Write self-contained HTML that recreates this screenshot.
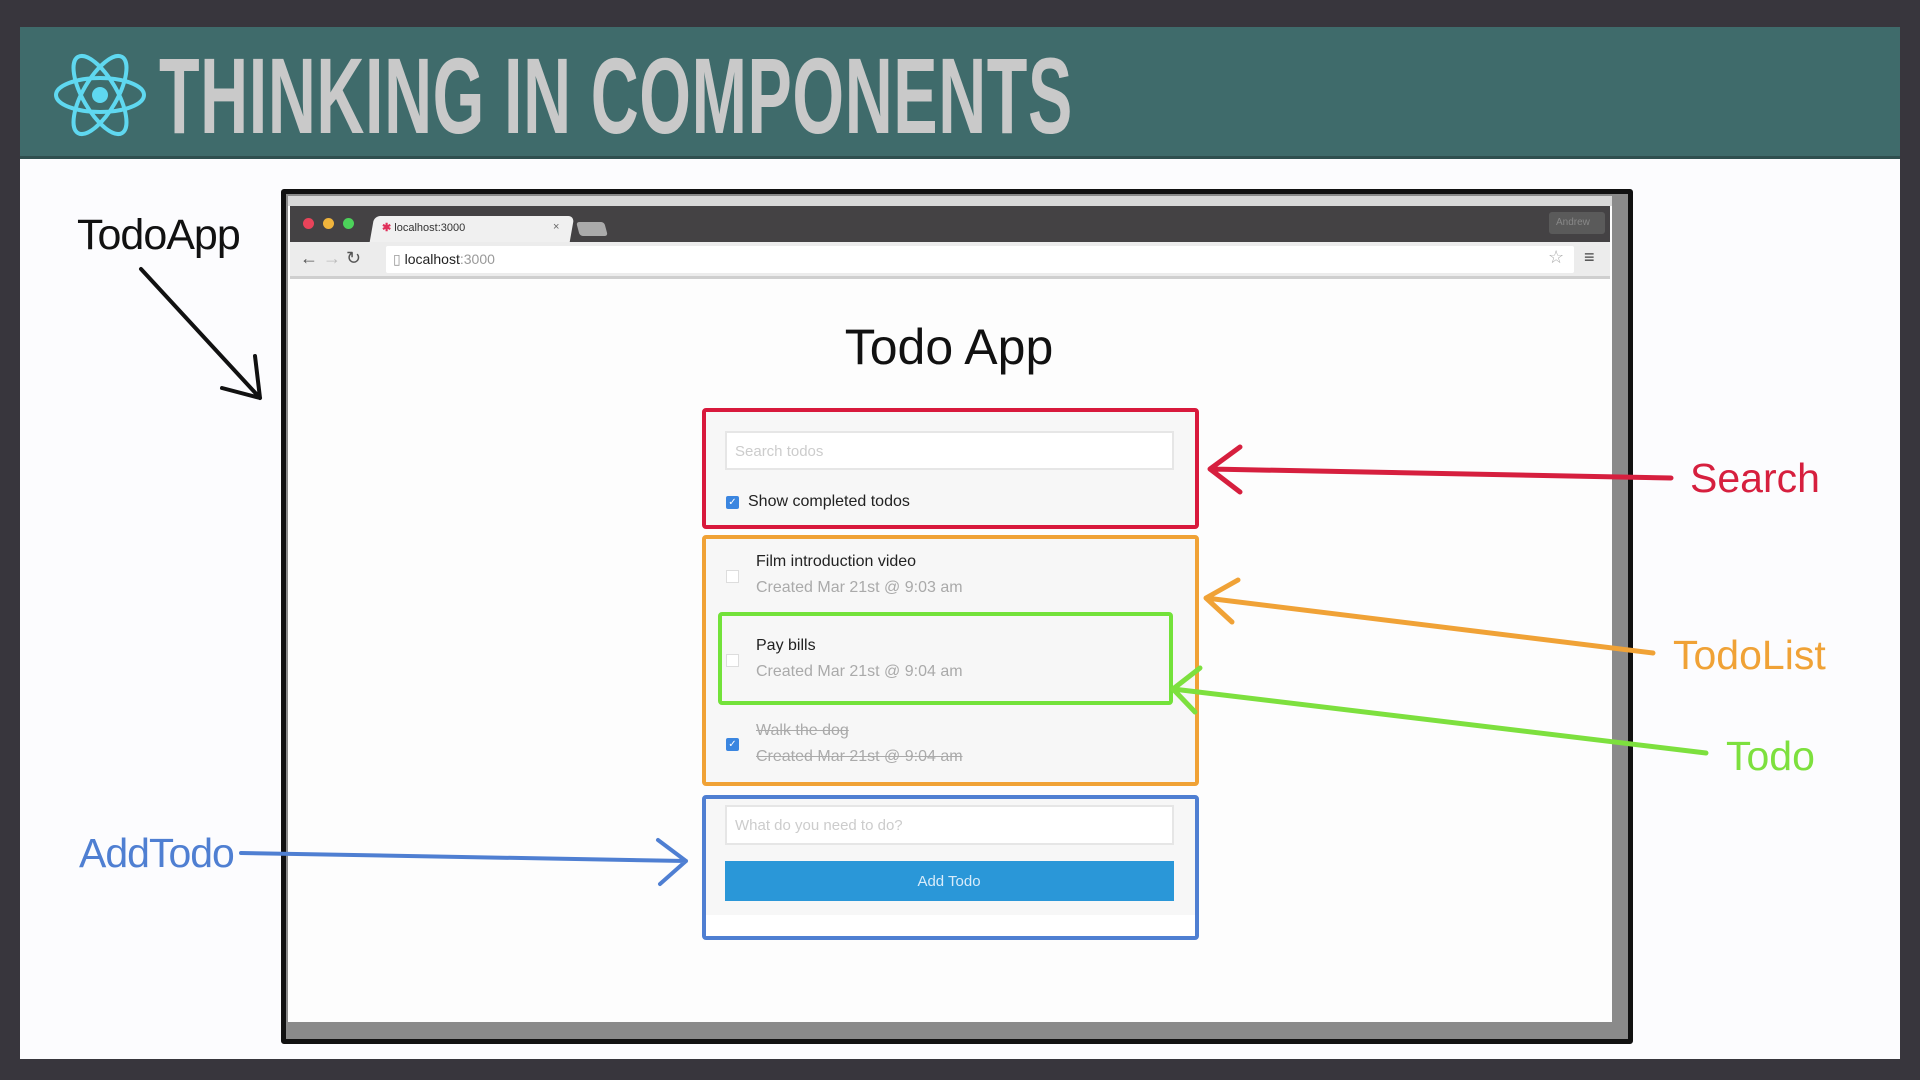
<!DOCTYPE html>
<html><head><meta charset="utf-8"><style>
*{margin:0;padding:0;box-sizing:border-box}
body{width:1920px;height:1080px;background:#38363d;position:relative;overflow:hidden;font-family:"Liberation Sans",sans-serif}
.abs{position:absolute}
#hdr{left:20px;top:27px;width:1880px;height:132px;background:#3f6b6b;border-bottom:3px solid #2f4f4f}
#slide{left:20px;top:159px;width:1880px;height:900px;background:#fcfcfe}
#title{left:159px;top:42px;font-size:108px;font-weight:bold;color:#c9c9c9;transform:scaleX(0.615);transform-origin:0 0;white-space:nowrap;letter-spacing:1px;line-height:1}
.t{position:absolute;white-space:nowrap}
</style></head><body>
<div id="hdr" class="abs"></div>
<div id="slide" class="abs"></div>
<div id="title" class="abs">THINKING IN COMPONENTS</div>
<svg class="abs" style="left:50px;top:45px" width="100" height="100" viewBox="-50 -50 100 100">
<g fill="none" stroke="#5fd8f0" stroke-width="4">
<ellipse rx="44" ry="17"/><ellipse rx="44" ry="17" transform="rotate(60)"/><ellipse rx="44" ry="17" transform="rotate(120)"/></g>
<circle r="8" fill="#5fd8f0"/></svg>

<!-- browser -->
<div class="abs" style="left:281px;top:189px;width:1352px;height:855px;background:#8a8a8a;border:5px solid #111;border-radius:3px"></div>
<div class="abs" style="left:288px;top:196px;width:1324px;height:826px;background:#fdfdfd"></div>
<div class="abs" style="left:290px;top:206px;width:1320px;height:36px;background:#444244"></div>
<div class="abs" style="left:288px;top:196px;width:1324px;height:10px;background:#d8d8d8"></div>
<div class="abs" style="left:303px;top:218px;width:11px;height:11px;border-radius:50%;background:#e8435a"></div>
<div class="abs" style="left:323px;top:218px;width:11px;height:11px;border-radius:50%;background:#f0b43c"></div>
<div class="abs" style="left:343px;top:218px;width:11px;height:11px;border-radius:50%;background:#4cd25a"></div>
<div class="abs" style="left:372px;top:216px;width:200px;height:26px;background:#f0f0f0;border-radius:6px 6px 0 0;transform:skewX(-10deg)"></div>
<div class="t" style="left:382px;top:221px;font-size:11px;color:#333"><span style="color:#e0305a;font-weight:bold">✱</span> localhost:3000</div>
<div class="t" style="left:553px;top:221px;font-size:11px;color:#666">×</div>
<div class="abs" style="left:578px;top:222px;width:28px;height:14px;background:#aaa;border-radius:3px;transform:skewX(15deg)"></div>
<div class="abs" style="left:1549px;top:212px;width:56px;height:22px;background:#5a5a5a;border-radius:3px"></div>
<div class="t" style="left:1556px;top:217px;font-size:10px;color:#888">Andrew</div>
<div class="abs" style="left:290px;top:242px;width:1320px;height:37px;background:#ececec;border-bottom:3px solid #cfcfcf"></div>
<div class="t" style="left:300px;top:248px;font-size:18px;color:#555">← <span style="color:#bbb">→</span> ↻</div>
<div class="abs" style="left:386px;top:246px;width:1188px;height:27px;background:#fff;border-radius:2px"></div>
<div class="t" style="left:393px;top:251px;font-size:14px;color:#999">▯ <span style="color:#222">localhost</span>:3000</div>
<div class="t" style="left:1548px;top:247px;font-size:18px;color:#aaa">☆</div>
<div class="t" style="left:1584px;top:247px;font-size:18px;color:#444">≡</div>

<div class="t" style="left:949px;top:318px;transform:translateX(-50%);font-size:50px;color:#111">Todo App</div>

<!-- red search -->
<div class="abs" style="left:702px;top:408px;width:497px;height:121px;background:#f7f7f7;border:4px solid #d8193c;border-radius:4px"></div>
<div class="abs" style="left:725px;top:431px;width:449px;height:39px;background:#fff;border:2px solid #e6e6e6"></div>
<div class="t" style="left:735px;top:443px;font-size:15px;color:#ccc">Search todos</div>
<div class="abs" style="left:726px;top:496px;width:13px;height:13px;background:#3b86e0;border-radius:2px;color:#fff;font-size:10px;text-align:center;line-height:13px">✓</div>
<div class="t" style="left:748px;top:493px;font-size:16px;color:#222">Show completed todos</div>

<!-- orange list -->
<div class="abs" style="left:702px;top:535px;width:497px;height:251px;background:#f7f7f7;border:4px solid #f0a236;border-radius:4px"></div>
<div class="abs" style="left:726px;top:570px;width:13px;height:13px;background:#fff;border:1px solid #ddd"></div>
<div class="t" style="left:756px;top:553px;font-size:16px;color:#222">Film introduction video</div>
<div class="t" style="left:756px;top:579px;font-size:16px;color:#aaa">Created Mar 21st @ 9:03 am</div>
<div class="abs" style="left:718px;top:612px;width:455px;height:93px;border:4px solid #73e23a;border-radius:4px"></div>
<div class="abs" style="left:726px;top:654px;width:13px;height:13px;background:#fff;border:1px solid #ddd"></div>
<div class="t" style="left:756px;top:637px;font-size:16px;color:#222">Pay bills</div>
<div class="t" style="left:756px;top:663px;font-size:16px;color:#aaa">Created Mar 21st @ 9:04 am</div>
<div class="abs" style="left:726px;top:738px;width:13px;height:13px;background:#3b86e0;border-radius:2px;color:#fff;font-size:10px;text-align:center;line-height:13px">✓</div>
<div class="t" style="left:756px;top:722px;font-size:16px;color:#aaa;text-decoration:line-through">Walk the dog</div>
<div class="t" style="left:756px;top:748px;font-size:16px;color:#aaa;text-decoration:line-through">Created Mar 21st @ 9:04 am</div>

<!-- blue add -->
<div class="abs" style="left:702px;top:795px;width:497px;height:145px;background:#fff;border:4px solid #4f7fd2;border-radius:4px"></div>
<div class="abs" style="left:706px;top:799px;width:489px;height:116px;background:#f7f7f7"></div>
<div class="abs" style="left:725px;top:805px;width:449px;height:40px;background:#fff;border:2px solid #e6e6e6"></div>
<div class="t" style="left:735px;top:817px;font-size:15px;color:#ccc">What do you need to do?</div>
<div class="abs" style="left:725px;top:861px;width:449px;height:40px;background:#2a97d8"></div>
<div class="t" style="left:949px;top:873px;transform:translateX(-50%);font-size:15px;color:#d8ecfa">Add Todo</div>

<!-- annotations -->
<div class="t" style="left:77px;top:211px;font-size:43px;color:#111;letter-spacing:-1px">TodoApp</div>
<div class="t" style="left:1690px;top:455px;font-size:41px;color:#d61f3e">Search</div>
<div class="t" style="left:1673px;top:632px;font-size:41px;color:#f0a236">TodoList</div>
<div class="t" style="left:1726px;top:733px;font-size:41px;color:#7de03e">Todo</div>
<div class="t" style="left:79px;top:830px;font-size:41px;color:#4f7fd2;letter-spacing:-1px">AddTodo</div>
<svg class="abs" style="left:0;top:0" width="1920" height="1080">
<g fill="none" stroke-width="4" stroke-linecap="round" stroke-linejoin="round">
<path d="M141 269 L260 398 M222 388 L260 398 L255 356" stroke="#111"/>
<path d="M1671 478 L1210 469 M1240 447 L1210 469 L1240 492" stroke="#d61f3e" stroke-width="5"/>
<path d="M1653 653 L1206 598 M1238 580 L1206 598 L1232 622" stroke="#f0a236" stroke-width="5"/>
<path d="M1706 753 L1173 689 M1200 668 L1173 689 L1195 712" stroke="#7de03e" stroke-width="5"/>
<path d="M241 853 L686 861 M658 840 L686 861 L660 884" stroke="#4f7fd2"/>
</g></svg>
</body></html>
